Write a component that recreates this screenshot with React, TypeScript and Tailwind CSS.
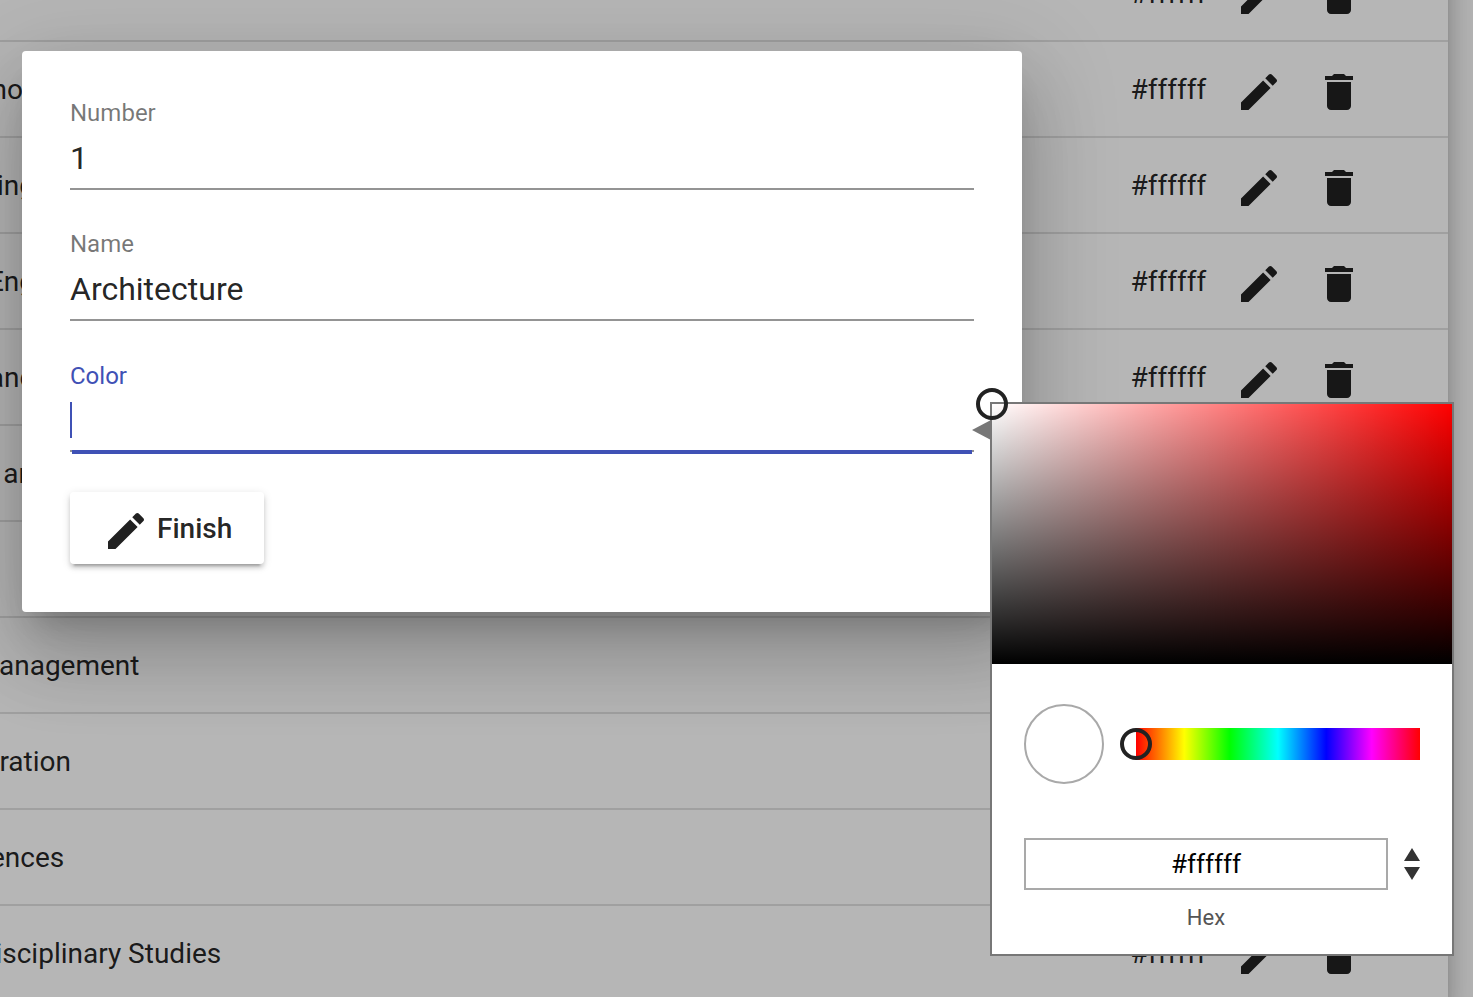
import React from "react";

const rows = [
  { name: "", end: "w-[20px]" },
  { name: "ho", end: "w-[23px]" },
  { name: "ing", end: "w-[35px]" },
  { name: "Eng", end: "w-[35px]" },
  { name: "and", end: "w-[35.25px]" },
  { name: "ar", end: "w-[28px]" },
  { name: "", end: "w-[20px]" },
  { name: "anagement", end: "w-[139.5px]" },
  { name: "ration", end: "w-[71px]" },
  { name: "ences", end: "w-[64.25px]" },
  { name: "isciplinary Studies", end: "w-[221.25px]" },
];

function EditIcon({ className = "" }: { className?: string }) {
  return (
    <svg viewBox="0 0 24 24" className={`size-12 shrink-0 fill-current ${className}`}>
      <path d="M3 17.25V21h3.75L17.81 9.94l-3.75-3.75L3 17.25zM20.71 7.04c.39-.39.39-1.02 0-1.41l-2.34-2.34c-.39-.39-1.02-.39-1.41 0l-1.83 1.83 3.75 3.75 1.83-1.83z" />
    </svg>
  );
}

function DeleteIcon({ className = "" }: { className?: string }) {
  return (
    <svg viewBox="0 0 24 24" className={`size-12 shrink-0 fill-current ${className}`}>
      <path d="M6 19c0 1.1.9 2 2 2h8c1.1 0 2-.9 2-2V7H6v12zM19 4h-3.5l-1-1h-5l-1 1H5v2h14V4z" />
    </svg>
  );
}

function Table() {
  return (
    <div className="-mt-[54px] w-[1448px] bg-white shadow-[0_10px_10px_-6px_rgba(0,0,0,0.2),0_16px_20px_2px_rgba(0,0,0,0.14),0_6px_28px_4px_rgba(0,0,0,0.12)]">
      {rows.map((row, i) => (
        <div
          key={i}
          className="flex h-24 items-center border-b-2 border-black/12 text-[28px] leading-8 text-black/87"
        >
          <div className={`flex shrink-0 justify-end pt-0.5 whitespace-nowrap ${row.end}`}>{row.name}</div>
          <div className="ml-auto w-[104.5px] shrink-0 pt-0.5">#ffffff</div>
          <EditIcon className="mt-1.5" />
          <DeleteIcon className="mt-1.5 mr-[85px] ml-8" />
        </div>
      ))}
    </div>
  );
}

function Field({ label, value }: { label: string; value: string }) {
  return (
    <div className="flex h-[131px] flex-col">
      <div className="text-2xl leading-7 text-black/54">{label}</div>
      <div className="mt-[13px] h-[50px] border-b-2 border-black/42 text-[32px] leading-9 text-black/87">
        {value}
      </div>
    </div>
  );
}

function Dialog() {
  return (
    <div className="absolute top-[51px] left-[22px] h-[561px] w-[1000px] rounded bg-white px-12 pt-12 shadow-[0_22px_30px_-14px_rgba(0,0,0,0.2),0_48px_76px_6px_rgba(0,0,0,0.14),0_18px_92px_16px_rgba(0,0,0,0.12)]">
      <Field label="Number" value="1" />
      <Field label="Name" value="Architecture" />
      <div className="mt-px text-2xl leading-7 text-[#3f51b5]">Color</div>
      <div className="mt-3 h-9 w-0.5 bg-[#3f51b5]" />
      <div className="mt-3 h-1 border-t-2 border-black/42">
        <div className="-mt-0.5 mr-0.5 ml-0.5 h-1 bg-[#3f51b5]" />
      </div>
      <button className="mt-[38px] flex h-[72px] w-[194px] items-center rounded pl-8 text-[28px] font-medium text-black/87 shadow-[0_6px_2px_-4px_rgba(0,0,0,0.2),0_4px_4px_0_rgba(0,0,0,0.14),0_2px_10px_0_rgba(0,0,0,0.12)]">
        <EditIcon className="mt-1.5" />
        <span className="ml-[7px] pt-0.5">Finish</span>
      </button>
    </div>
  );
}

function ColorPicker() {
  return (
    <div className="absolute top-[402px] left-[990px] h-[554px] w-[464px] border-2 border-[#777] bg-white">
      <div className="h-[260px] bg-[linear-gradient(to_top,#000_0%,rgba(0,0,0,0)_100%),linear-gradient(to_right,#fff_0%,rgba(255,255,255,0)_100%)] bg-[#f00]" />
      <div className="mt-10 flex items-center gap-8 px-8">
        <div className="size-20 shrink-0 rounded-full border-2 border-[#a9a9a9]" />
        <div className="relative h-8 w-[284px] bg-[linear-gradient(to_right,#f00_0%,#ff0_17%,#0f0_33%,#0ff_50%,#00f_67%,#f0f_83%,#f00_100%)]">
          <div className="absolute top-0 -left-4 size-8 rounded-full border-4 border-[#222]" />
        </div>
      </div>
      <div className="mt-[54px] flex items-center gap-4 px-8">
        <div className="flex h-[52px] w-[364px] items-center justify-center border-2 border-[#a9a9a9] text-[26px] text-black">
          #ffffff
        </div>
        <svg viewBox="0 0 16 32" className="h-8 w-4 fill-[#333]">
          <path d="M8 0 16 13H0zM0 19h16L8 32z" />
        </svg>
      </div>
      <div className="mt-3.5 ml-8 w-[364px] text-center text-[22px] leading-7 text-[#555]">Hex</div>
      <svg viewBox="0 0 18 20" className="absolute top-4 -left-5 h-5 w-[18px] fill-[#777]">
        <path d="M0 10 18 .5v19z" />
      </svg>
      <div className="absolute -top-4 -left-4 size-8 rounded-full border-4 border-[#222]" />
    </div>
  );
}

export default function App() {
  return (
    <div className="relative flex h-screen w-full flex-col overflow-hidden bg-[#fafafa] font-[Roboto,sans-serif]">
      <Table />
      <div className="absolute inset-0 bg-black/[0.288]" />
      <Dialog />
      <ColorPicker />
    </div>
  );
}
